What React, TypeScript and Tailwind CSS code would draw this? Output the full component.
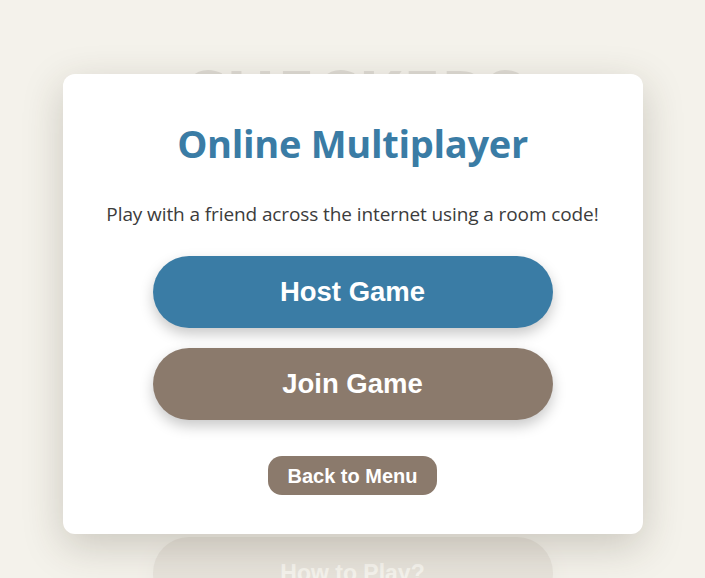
import React from 'react';

export default function App() {
  return (
    <div className="relative h-[578px] overflow-hidden bg-gradient-to-b from-[#f5f2eb] to-[#f3f0e9] font-['Liberation_Sans',Arial,sans-serif]">
      {/* Main menu behind the dialog */}
      <div className="flex flex-col items-center pt-[48px]">
        <h1 className="text-[66px] font-bold leading-[90px] tracking-[1px] text-[#4a443c] font-['Open_Sans',sans-serif]">
          CHECKERS
        </h1>
        <div className="mt-[123px] flex flex-col gap-5">
          <div className="h-[72px] w-[400px]" />
          <div className="h-[72px] w-[400px]" />
          <div className="h-[72px] w-[400px]" />
          <button className="h-[72px] w-[400px] rounded-full bg-[#8b7a6c] text-[23px] font-bold text-white shadow-[0_6px_16px_rgba(0,0,0,0.25)]">
            How to Play?
          </button>
        </div>
      </div>

      {/* Overlay */}
      <div className="absolute inset-0 flex justify-center bg-[#f4f1ea]/[0.88] pt-[74px]">
        <div className="flex h-[460px] w-[580px] flex-col items-center rounded-[12px] bg-white pt-[41px] shadow-[0_12px_40px_rgba(60,50,30,0.22)]">
          <h2 className="text-[38px] font-bold leading-[56px] text-[#3a7ca5] font-['Open_Sans',sans-serif] tracking-[-0.3px]">
            Online Multiplayer
          </h2>
          <p className="mt-[30px] text-[19px] leading-[26px] text-[#3c3c3c] font-['Open_Sans',sans-serif] tracking-[-0.1px]">
            Play with a friend across the internet using a room code!
          </p>
          <button className="mt-[29px] h-[72px] w-[400px] rounded-full bg-[#3a7ca5] text-[27.5px] font-bold text-white shadow-[0_6px_14px_rgba(0,0,0,0.22)]">
            Host Game
          </button>
          <button className="mt-[20px] h-[72px] w-[400px] rounded-full bg-[#8b7a6c] text-[27.5px] font-bold text-white shadow-[0_6px_14px_rgba(0,0,0,0.22)]">
            Join Game
          </button>
          <button className="mt-[36px] h-[39px] w-[169px] rounded-[14px] bg-[#8b7a6c] text-[20px] font-bold text-white">
            Back to Menu
          </button>
        </div>
      </div>
    </div>
  );
}
